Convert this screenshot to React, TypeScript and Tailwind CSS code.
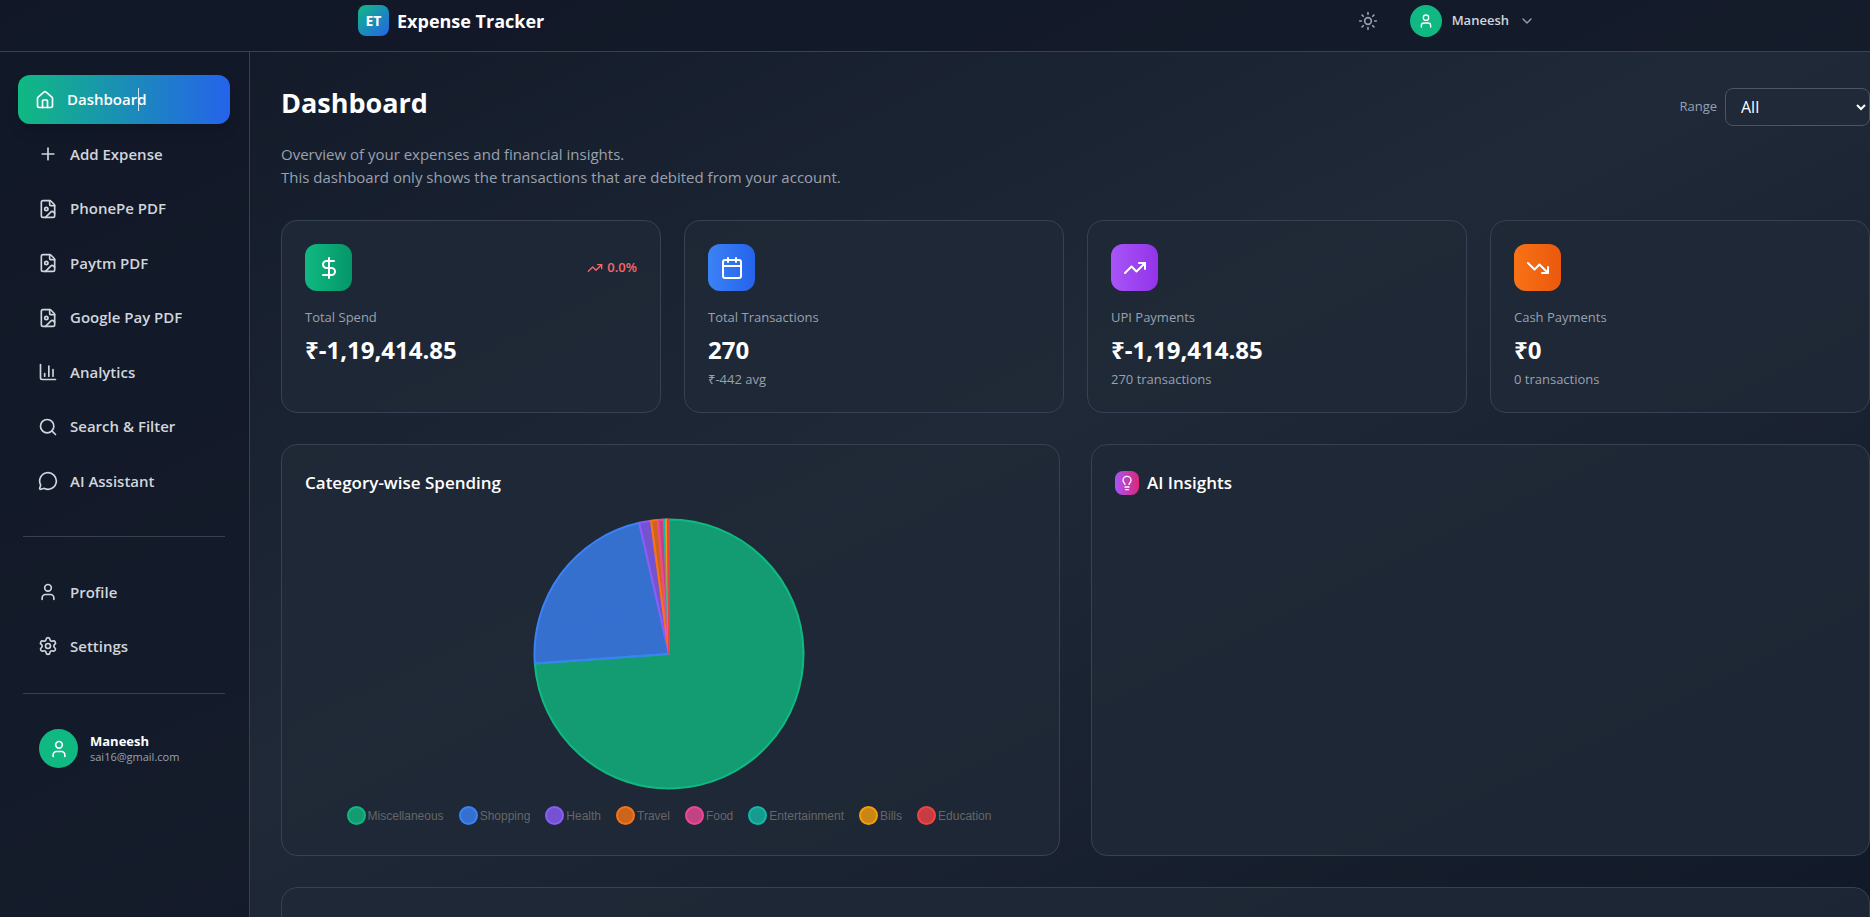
import type { ComponentType } from "react";
import {
  House,
  Plus,
  FileImage,
  ChartColumn,
  Search,
  MessageCircle,
  User,
  Settings,
  Sun,
  ChevronDown,
  DollarSign,
  Calendar,
  TrendingUp,
  TrendingDown,
  Lightbulb,
} from "lucide-react";

type Icon = ComponentType<{ className?: string; strokeWidth?: number }>;

const mainLinks: { label: string; icon: Icon }[] = [
  { label: "Add Expense", icon: Plus },
  { label: "PhonePe PDF", icon: FileImage },
  { label: "Paytm PDF", icon: FileImage },
  { label: "Google Pay PDF", icon: FileImage },
  { label: "Analytics", icon: ChartColumn },
  { label: "Search & Filter", icon: Search },
  { label: "AI Assistant", icon: MessageCircle },
];

const accountLinks: { label: string; icon: Icon }[] = [
  { label: "Profile", icon: User },
  { label: "Settings", icon: Settings },
];

const stats: {
  label: string;
  value: string;
  note?: string;
  trend?: string;
  icon: Icon;
  tone: string;
}[] = [
  { label: "Total Spend", value: "₹-1,19,414.85", trend: "0.0%", icon: DollarSign, tone: "from-[#10b981] to-[#059669]" },
  { label: "Total Transactions", value: "270", note: "₹-442 avg", icon: Calendar, tone: "from-[#3b82f6] to-[#2563eb]" },
  { label: "UPI Payments", value: "₹-1,19,414.85", note: "270 transactions", icon: TrendingUp, tone: "from-[#a855f7] to-[#9333ea]" },
  { label: "Cash Payments", value: "₹0", note: "0 transactions", icon: TrendingDown, tone: "from-[#f97316] to-[#ea580c]" },
];

const slices = [
  { label: "Miscellaneous", color: "#10b981", from: 0, to: 265.9 },
  { label: "Shopping", color: "#3b82f6", from: 265.9, to: 347.2 },
  { label: "Health", color: "#8b5cf6", from: 347.2, to: 352.3 },
  { label: "Travel", color: "#f97316", from: 352.3, to: 355.3 },
  { label: "Food", color: "#ec4899", from: 355.3, to: 357.9 },
  { label: "Entertainment", color: "#14b8a6", from: 357.9, to: 358.8 },
  { label: "Bills", color: "#f59e0b", from: 358.8, to: 359.5 },
  { label: "Education", color: "#ef4444", from: 359.5, to: 360 },
];

function arc(from: number, to: number) {
  const point = (deg: number) => {
    const rad = ((deg - 90) * Math.PI) / 180;
    return `${136 + 134.5 * Math.cos(rad)} ${136 + 134.5 * Math.sin(rad)}`;
  };
  return `M136 136 L${point(from)} A134.5 134.5 0 ${to - from > 180 ? 1 : 0} 1 ${point(to)} Z`;
}

function NavLink({ label, icon: Glyph }: { label: string; icon: Icon }) {
  return (
    <a href="#" className="flex h-[46px] items-center gap-3 rounded-xl px-5 font-semibold text-gray-300">
      <Glyph className="size-5" />
      {label}
    </a>
  );
}

const card = "rounded-2xl border border-gray-700 bg-[#1f2937]/80";

export default function App() {
  return (
    <div className="flex h-screen flex-col overflow-hidden bg-linear-to-br/srgb from-[#111827] via-[#1f2937] to-[#111827] font-['Open_Sans','Noto_Sans',sans-serif] text-[15px] text-white">
      <header className="border-b border-gray-700 bg-[#111827]/80">
        <div className="mx-auto flex h-[51px] max-w-7xl items-start justify-between px-8 pt-[5px]">
          <div className="flex items-center gap-2 pl-[31px]">
            <div className="flex size-[31px] items-center justify-center rounded-lg bg-linear-to-br/srgb from-[#10b981] to-[#2563eb] text-sm font-bold">
              ET
            </div>
            <span className="text-lg font-bold">Expense Tracker</span>
          </div>
          <div className="flex items-center gap-7">
            <button type="button" aria-label="Toggle theme" className="p-1 text-gray-400">
              <Sun className="size-5" />
            </button>
            <button type="button" className="flex items-center gap-2.5 pr-2 text-[13px] font-semibold text-gray-300">
              <span className="flex size-8 items-center justify-center rounded-full bg-[#10b981] text-white">
                <User className="size-4" />
              </span>
              Maneesh
              <ChevronDown className="size-4 text-gray-400" />
            </button>
          </div>
        </div>
      </header>

      <div className="flex min-h-0 flex-1">
        <aside className="w-[250px] shrink-0 border-r border-gray-700 bg-[#111827]/80 pt-[23px]">
          <nav className="flex flex-col pr-[19px] pl-[18px]">
            <a
              href="#"
              aria-current="page"
              className="relative mb-[7px] flex h-[49px] items-center gap-3 rounded-xl bg-linear-to-r/srgb from-[#10b981] to-[#2563eb] px-[17px] font-semibold text-white shadow-lg"
            >
              <House className="size-5" />
              Dashboard
              <span className="absolute top-[13px] left-[120px] h-[23px] w-px bg-white/80" />
            </a>
            <div className="flex h-[373px] flex-col justify-between">
              {mainLinks.map((l) => (
                <NavLink key={l.label} {...l} />
              ))}
            </div>
          </nav>
          <hr className="my-8 mr-6 ml-[23px] border-gray-700" />
          <nav className="flex flex-col gap-2 px-[18px]">
            {accountLinks.map((l) => (
              <NavLink key={l.label} {...l} />
            ))}
          </nav>
          <hr className="mt-6 mr-6 mb-[35px] ml-[23px] border-gray-700" />
          <div className="flex items-center gap-3 pl-[39px]">
            <span className="flex size-[39px] items-center justify-center rounded-full bg-[#10b981]">
              <User className="size-5" />
            </span>
            <div>
              <p className="text-[13px] leading-4 font-bold">Maneesh</p>
              <p className="text-[11px] leading-4 text-gray-400">sai16@gmail.com</p>
            </div>
          </div>
        </aside>

        <main className="min-w-0 flex-1 overflow-hidden pt-[35px] pl-[31px]">
          <div className="flex items-start justify-between">
            <div>
              <h1 className="text-[27px] leading-8 font-bold">Dashboard</h1>
              <p className="mt-6 leading-[23px] text-gray-400">
                Overview of your expenses and financial insights.
                <br />
                This dashboard only shows the transactions that are debited from your account.
              </p>
            </div>
            <div className="flex items-center gap-2 pt-px">
              <label htmlFor="range" className="text-[13px] text-gray-400">
                Range
              </label>
              <select
                id="range"
                defaultValue="All"
                className="h-[38px] w-[145px] rounded-lg border border-gray-600 bg-[#1f2937] px-[11px] text-base text-white"
              >
                <option>All</option>
              </select>
            </div>
          </div>

          <section className="mt-[31px] grid grid-cols-4 gap-[23px]">
            {stats.map(({ label, value, note, trend, icon: Glyph, tone }) => (
              <article key={label} className={`${card} h-[193px] px-[23px] pt-[23px]`}>
                <div className="flex items-center justify-between">
                  <span className={`flex size-[47px] items-center justify-center rounded-xl bg-linear-to-r/srgb ${tone}`}>
                    <Glyph className="size-6" />
                  </span>
                  {trend && (
                    <span className="flex items-center gap-1 text-[13px] font-semibold text-red-400">
                      <TrendingUp className="size-4" />
                      {trend}
                    </span>
                  )}
                </div>
                <h2 className="mt-4 text-[13px] leading-5 font-medium text-gray-400">{label}</h2>
                <p className="mt-[7px] text-2xl leading-8 font-bold">{value}</p>
                {note && <p className="mt-[3px] text-[13px] leading-5 text-gray-400">{note}</p>}
              </article>
            ))}
          </section>

          <section className="mt-[31px] grid grid-cols-2 gap-[31px]">
            <article className={`${card} h-[412px] pt-6 pr-[26px] pl-[23px]`}>
              <h2 className="text-[17px] leading-7 font-semibold">Category-wise Spending</h2>
              <svg viewBox="0 0 272 272" className="mx-auto mt-[21px] block size-[272px]" role="img" aria-label="Category-wise spending">
                {slices.map((s) => (
                  <path key={s.label} d={arc(s.from, s.to)} fill={s.color} fillOpacity={0.8} stroke={s.color} strokeWidth={2} strokeLinejoin="bevel" />
                ))}
              </svg>
              <ul className="mt-4 flex justify-center gap-[15px] font-['Liberation_Sans',Arial,sans-serif] text-xs text-[#666666]">
                {slices.map((s) => (
                  <li key={s.label} className="flex items-center gap-0.5">
                    <svg viewBox="0 0 19 19" className="size-[19px]" aria-hidden="true">
                      <circle cx="9.5" cy="9.5" r="8.5" fill={s.color} fillOpacity={0.8} stroke={s.color} strokeWidth={2} />
                    </svg>
                    {s.label}
                  </li>
                ))}
              </ul>
            </article>
            <article className={`${card} px-[23px] pt-6`}>
              <h2 className="flex items-center gap-2 text-[17px] leading-7 font-semibold">
                <span className="flex size-6 items-center justify-center rounded-lg bg-linear-to-r/srgb from-[#a855f7] to-[#db2777]">
                  <Lightbulb className="size-4" />
                </span>
                AI Insights
              </h2>
            </article>
          </section>

          <section className={`${card} mt-[31px] h-40`} />
        </main>
      </div>
    </div>
  );
}
